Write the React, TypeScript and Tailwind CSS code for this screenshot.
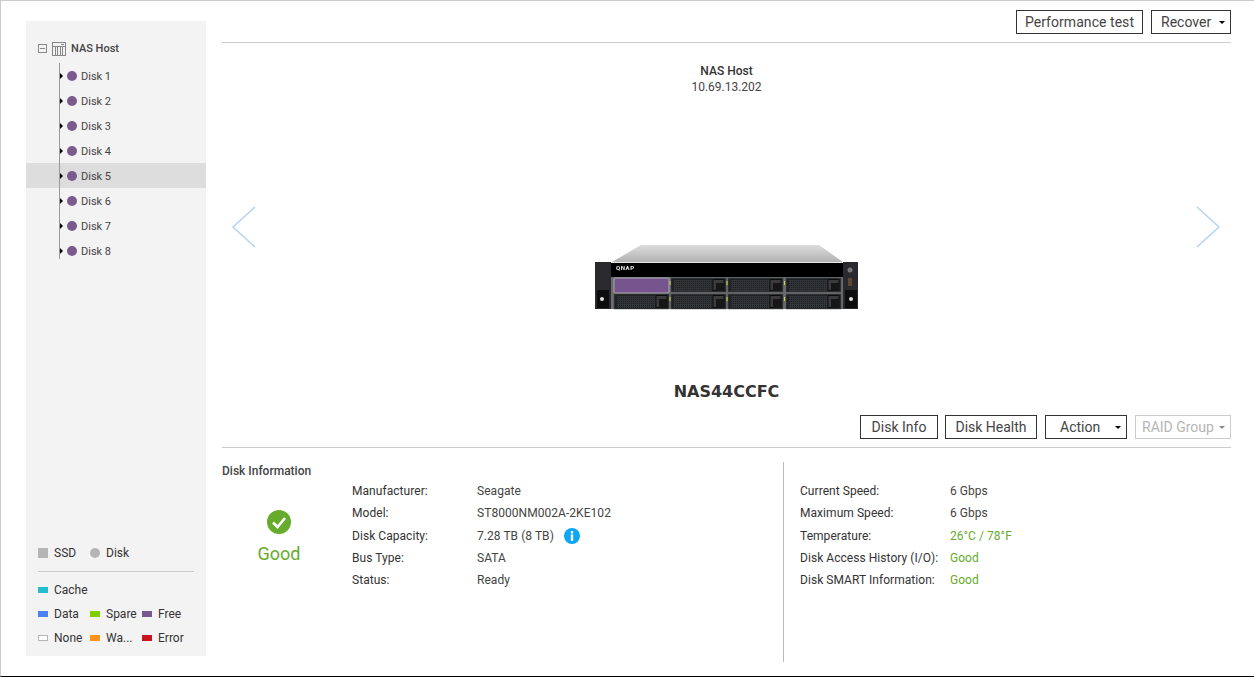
const font = { fontFamily: "Roboto, sans-serif" };

const disks = ["Disk 1", "Disk 2", "Disk 3", "Disk 4", "Disk 5", "Disk 6", "Disk 7", "Disk 8"];

function Chevron({ flip }: { flip?: boolean }) {
  return (
    <svg width="26" height="42" viewBox="0 0 26 42" fill="none" stroke="#b5d3f3" strokeWidth="1.5">
      <path d={flip ? "M2 1 L24 21 L2 41" : "M24 1 L2 21 L24 41"} />
    </svg>
  );
}

function HostIcon() {
  return (
    <svg width="14" height="14" viewBox="0 0 14 14" fill="none" stroke="#888" strokeWidth="1">
      <rect x="0.5" y="0.5" width="13" height="13" />
      <path d="M0.5 4.5H13.5M9 2.5H12M3.5 4.5V13.5M5.5 4.5V13.5M8.5 4.5V13.5M10.5 4.5V13.5" />
    </svg>
  );
}

// one drive bay of the NAS front panel
function Bay({ x, y, h = 14 }: { x: number; y: number; h?: number }) {
  return (
    <g>
      <rect x={x} y={y} width="55" height={h} fill="#232426" stroke="#4a4b4d" strokeWidth="0.5" />
      <rect x={x + 3} y={y + 2} width="38" height={h - 3} fill="url(#mesh)" />
      <rect x={x + 42} y={y + 1.5} width="11" height={h - 3} fill="#3a3b3d" stroke="#111" strokeWidth="1" />
      <rect x={x + 45} y={y + 5} width="8" height={h - 6} fill="#121212" />
    </g>
  );
}

function NasImage() {
  return (
    <svg width="264" height="65" viewBox="0 0 264 65">
      <defs>
        <linearGradient id="lid" x1="0" y1="0" x2="0" y2="1">
          <stop offset="0" stopColor="#dcdcdc" />
          <stop offset="1" stopColor="#b2b2b2" />
        </linearGradient>
        <pattern id="mesh" width="2" height="2" patternUnits="userSpaceOnUse">
          <rect width="2" height="2" fill="#333436" />
          <rect width="1" height="1" fill="#1d1e20" />
        </pattern>
        <filter id="soft">
          <feGaussianBlur stdDeviation="0.4" />
        </filter>
      </defs>
      <g filter="url(#soft)">
        <polygon points="46,0 224,0 248,17 17,17" fill="url(#lid)" />
        <rect x="16" y="17" width="232" height="1" fill="#e5e5e5" />
        <rect x="16" y="18" width="232" height="14" fill="#050506" />
        <rect x="16" y="32" width="232" height="32" fill="#6b6c6e" />
        <rect x="0" y="17" width="16" height="47" fill="#2b2c2f" />
        <rect x="248" y="17" width="15" height="47" fill="#2b2c2f" />
        <rect x="2" y="45" width="12" height="18" fill="#111" />
        <rect x="250" y="45" width="12" height="18" fill="#111" />
        <circle cx="7" cy="54" r="2" fill="#e2e2e2" />
        <circle cx="256" cy="54" r="2" fill="#e2e2e2" />
        <circle cx="255" cy="25" r="2.5" fill="#777" />
        <rect x="253" y="33" width="4" height="8" fill="#5a4a35" />
        <text x="21" y="24.5" fontSize="6" fontWeight="700" fill="#eeeeee" textLength="18" style={font}>QNAP</text>
        <rect x="19" y="33" width="55" height="15" rx="1" fill="#76558f" stroke="#a8a8a8" strokeWidth="1" />
        <Bay x={19} y={49} h={15} />
        <Bay x={76} y={33} />
        <Bay x={76} y={49} h={15} />
        <Bay x={133} y={33} />
        <Bay x={133} y={49} h={15} />
        <Bay x={191} y={33} />
        <Bay x={191} y={49} h={15} />
        <rect x="74.5" y="36" width="1" height="4" fill="#c9d24a" />
        <rect x="74.5" y="52" width="1" height="4" fill="#c9d24a" />
        <rect x="131.5" y="36" width="1" height="4" fill="#c9d24a" />
        <rect x="131.5" y="52" width="1" height="4" fill="#c9d24a" />
        <rect x="189" y="36" width="1" height="4" fill="#c9d24a" />
        <rect x="189" y="52" width="1" height="4" fill="#c9d24a" />
      </g>
    </svg>
  );
}

function Caret({ color = "#000" }: { color?: string }) {
  return (
    <svg width="6" height="3" viewBox="0 0 6 3" className="shrink-0">
      <path d="M0 0H6L3 3Z" fill={color} />
    </svg>
  );
}

function Swatch({ color, outline }: { color: string; outline?: boolean }) {
  return (
    <span
      className={`inline-block h-[6px] w-[10px] shrink-0 ${outline ? "border border-[#b5b5b5] bg-white" : ""}`}
      style={outline ? undefined : { backgroundColor: color }}
    />
  );
}

function LegendItem({ color, label, outline }: { color: string; label: string; outline?: boolean }) {
  return (
    <div className="flex w-[52px] items-center gap-[6px]">
      <Swatch color={color} outline={outline} />
      <span>{label}</span>
    </div>
  );
}

function Row({ label, value, valueClass = "text-[#444]", labelWidth, children }: { label: string; value: string; valueClass?: string; labelWidth: string; children?: React.ReactNode }) {
  return (
    <div className="flex h-[22.25px] items-center text-[12px] tracking-[0.05px]">
      <span className={`${labelWidth} text-[#333]`}>{label}</span>
      <span className={valueClass}>{value}</span>
      {children}
    </div>
  );
}

export default function App() {
  return (
    <div style={font} className="flex h-[677px] w-[1254px] overflow-hidden border-t border-b border-l border-t-[#cccccc] border-b-black border-l-[#cccccc] bg-white pl-[25px] pt-[9px] text-[#333]">
      {/* left tree */}
      <aside className="mt-[11px] flex h-[635px] w-[180px] shrink-0 flex-col bg-[#f3f3f3] text-[12px]">
        <div className="flex h-[42px] items-center pl-[12px] pt-[13px]">
          <span className="flex h-[9px] w-[9px] items-center justify-center border border-[#888]">
            <span className="h-px w-[5px] bg-[#888]" />
          </span>
          <span className="ml-[5px] flex"><HostIcon /></span>
          <span className="ml-[5px] mt-[2px] text-[11px] font-medium text-[#444]">NAS Host</span>
        </div>
        <div className="relative">
          <div className="absolute left-[33px] top-0 h-[196px] w-px bg-[#999]" />
          {disks.map((d) => (
            <div key={d} className={`flex h-[25px] items-center pl-[33px] pt-[1px] ${d === "Disk 5" ? "bg-[#dddddd]" : ""}`}>
              <span className="h-0 w-0 border-y-[4px] border-l-[4px] border-y-transparent border-l-black" />
              <span className="ml-[4px] h-[10px] w-[10px] rounded-full bg-[#7b5a8e]" />
              <span className="ml-[4px] mt-[2px] text-[11px] text-[#444]">{d}</span>
            </div>
          ))}
        </div>
        <div className="mt-auto px-[12px] pb-[6px] text-[12px] text-[#333]">
          <div className="flex items-center pb-[9px]">
            <span className="h-[10px] w-[10px] bg-[#b5b5b5]" />
            <span className="ml-[6px] w-[36px]">SSD</span>
            <span className="h-[10px] w-[10px] rounded-full bg-[#b5b5b5]" />
            <span className="ml-[6px]">Disk</span>
          </div>
          <div className="h-px w-[156px] bg-[#cccccc]" />
          <div className="flex h-[24px] items-center pt-[12px]"><LegendItem color="#26bcd0" label="Cache" /></div>
          <div className="mt-[6px] flex h-[24px] items-center">
            <LegendItem color="#4b82f0" label="Data" />
            <LegendItem color="#7fce00" label="Spare" />
            <LegendItem color="#7a5a8e" label="Free" />
          </div>
          <div className="flex h-[24px] items-center">
            <LegendItem color="" outline label="None" />
            <LegendItem color="#ff9320" label="Wa..." />
            <LegendItem color="#c8161d" label="Error" />
          </div>
        </div>
      </aside>

      {/* main */}
      <main className="ml-[16px] flex w-[1009px] shrink-0 flex-col">
        <div className="flex h-[24px] items-start justify-end gap-[8px]">
          <button className="h-[24px] w-[127px] border border-[#333] text-[14px] tracking-[0.05px] text-[#444]">Performance test</button>
          <button className="flex h-[24px] w-[80px] items-center justify-between border border-[#333] pl-[9px] pr-[5px] text-[14px] text-[#444]">
            Recover <Caret />
          </button>
        </div>
        <div className="mt-[8px] h-px bg-[#cccccc]" />

        <div className="relative flex h-[372px] flex-col items-center">
          <div className="mt-[20px] text-[12px] font-medium leading-[16px] text-[#333]">NAS Host</div>
          <div className="text-[12px] leading-[16px] text-[#444]">10.69.13.202</div>
          <div className="absolute left-[9px] top-[163px] flex"><Chevron /></div>
          <div className="absolute right-[10px] top-[163px] flex"><Chevron flip /></div>
          <div className="mt-[150px] flex"><NasImage /></div>
          <div className="mt-[72px] text-[16px] font-bold leading-[20px] text-[#333]" style={{ fontFamily: "'DejaVu Sans', sans-serif" }}>NAS44CCFC</div>
        </div>

        <div className="flex h-[24px] justify-end gap-[7px]">
          <button className="h-[24px] w-[78px] border border-[#333] text-[14px] text-[#444]">Disk Info</button>
          <button className="h-[24px] w-[92px] border border-[#333] text-[14px] text-[#444]">Disk Health</button>
          <button className="ml-[1px] flex h-[24px] w-[82px] items-center justify-between border border-[#333] pl-[14px] pr-[5px] text-[14px] text-[#444]">
            Action <Caret />
          </button>
          <button className="ml-[1px] flex h-[24px] w-[96px] items-center justify-between border border-[#cccccc] pl-[6px] pr-[5px] text-[14px] text-[#b5b5b5]">
            RAID Group <Caret color="#888" />
          </button>
        </div>
        <div className="mt-[8px] h-px bg-[#cccccc]" />

        <div className="mt-[14px] flex h-[200px]">
          <div className="w-[130px] shrink-0">
            <div className="mt-[1px] text-[12px] font-medium leading-[16px] text-[#444]">Disk Information</div>
            <div className="mt-[31px] flex w-[114px] flex-col items-center">
              <svg width="24" height="24" viewBox="0 0 24 24">
                <circle cx="12" cy="12" r="12" fill="#66ab2c" />
                <path d="M6 12.5 L10.5 17 L18 8" fill="none" stroke="#fff" strokeWidth="2.6" />
              </svg>
              <span className="mt-[7px] text-[18px] leading-[26px] text-[#66ab2c]">Good</span>
            </div>
          </div>
          <div className="w-[432px] shrink-0 border-r border-[#bbbbbb] pt-[18px]">
            <Row label="Manufacturer:" value="Seagate" labelWidth="w-[125px]" />
            <Row label="Model:" value="ST8000NM002A-2KE102" labelWidth="w-[125px]" />
            <Row label="Disk Capacity:" value="7.28 TB (8 TB)" labelWidth="w-[125px]">
              <svg width="16" height="16" viewBox="0 0 16 16" className="ml-[10px]">
                <circle cx="8" cy="8" r="8" fill="#0ea5f5" />
                <rect x="6.8" y="3" width="2.4" height="2.4" fill="#fff" />
                <rect x="6.8" y="6.4" width="2.4" height="6.4" fill="#fff" />
              </svg>
            </Row>
            <Row label="Bus Type:" value="SATA" labelWidth="w-[125px]" />
            <Row label="Status:" value="Ready" labelWidth="w-[125px]" />
          </div>
          <div className="pl-[16px] pt-[18px]">
            <Row label="Current Speed:" value="6 Gbps" labelWidth="w-[150px]" />
            <Row label="Maximum Speed:" value="6 Gbps" labelWidth="w-[150px]" />
            <Row label="Temperature:" value="26°C / 78°F" valueClass="text-[#66ab2c]" labelWidth="w-[150px]" />
            <Row label="Disk Access History (I/O):" value="Good" valueClass="text-[#66ab2c]" labelWidth="w-[150px]" />
            <Row label="Disk SMART Information:" value="Good" valueClass="text-[#66ab2c]" labelWidth="w-[150px]" />
          </div>
        </div>
      </main>
    </div>
  );
}
